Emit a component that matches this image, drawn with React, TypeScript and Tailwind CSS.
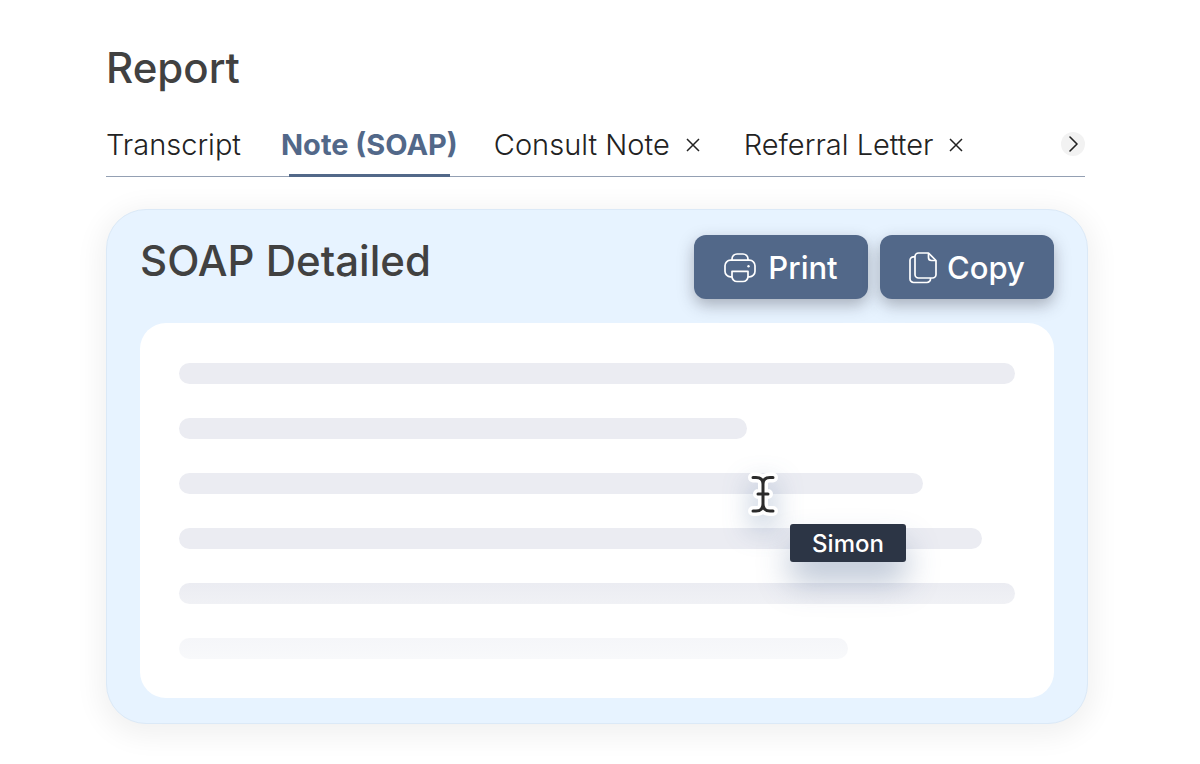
import React from "react";

const bars = [
  "w-full bg-[#ebecf2]",
  "w-[68%] bg-[#ebecf2]",
  "w-[89%] bg-[#ebecf2]",
  "w-[96%] bg-[#ebecf2]",
  "w-full bg-linear-to-b from-[#ebecf2] to-[#f0f1f5]",
  "w-[80%] bg-linear-to-b from-[#f5f6f9] to-[#f8f9fb]",
];

function CloseIcon() {
  return (
    <svg width="14" height="14" viewBox="0 0 14 14" fill="none" stroke="#222" strokeWidth="1.5" aria-hidden="true">
      <path d="M1 1 13 13M13 1 1 13" />
    </svg>
  );
}

function PrintIcon() {
  return (
    <svg width="32" height="30" viewBox="0 0 32 30" fill="none" stroke="#fff" strokeWidth="1.7" strokeLinejoin="round" aria-hidden="true">
      <path d="M8 7.2V6a5 5 0 0 1 5-5h6a5 5 0 0 1 5 5v1.200" />
      <path d="M8 23.800H6.500A5.500 5.500 0 0 1 1 18.300V12.700A5.500 5.500 0 0 1 6.500 7.200H25.500A5.500 5.500 0 0 1 31 12.700V18.300A5.500 5.500 0 0 1 25.500 23.800H24" />
      <path d="M8 18.300H24V23.500a5 5 0 0 1-5 5H13a5 5 0 0 1-5-5Z" />
      <circle cx="24.500" cy="13.200" r="1.200" fill="#fff" stroke="none" />
    </svg>
  );
}

function CopyIcon() {
  return (
    <svg width="28" height="32" viewBox="0 0 28 32" fill="none" stroke="#fff" strokeWidth="1.7" strokeLinejoin="round" aria-hidden="true">
      <path d="M19.500 1H9.500A3.500 3.500 0 0 0 6 4.500V22.500A3.500 3.500 0 0 0 9.500 26H23.500A3.500 3.500 0 0 0 27 22.500V8.500Z" />
      <path d="M19.500 1V5.500a3 3 0 0 0 3 3H27" />
      <path d="M6 4.800H4.500A3.500 3.500 0 0 0 1 8.300V27a3.500 3.500 0 0 0 3.500 3.500H18A3.500 3.500 0 0 0 21.500 27V26" />
    </svg>
  );
}

function TextCursor() {
  return (
    <svg width="34" height="48" viewBox="0 0 34 48" fill="none" strokeLinecap="round" strokeLinejoin="round" className="drop-shadow-[0_12px_14px_rgba(60,95,145,0.4)]" aria-hidden="true">
      <g stroke="#fff" strokeWidth="10">
        <path d="M7 6.500H10Q17 6.500 17 13V33Q17 40 10 40H7M27 6.500H24Q17 6.500 17 13M17 33Q17 40 24 40H27M12 23H22" />
      </g>
      <g stroke="#2b2b2b" strokeWidth="3">
        <path d="M7 6.500H10Q17 6.500 17 13V33Q17 40 10 40H7M27 6.500H24Q17 6.500 17 13M17 33Q17 40 24 40H27M12 23H22" />
      </g>
    </svg>
  );
}

const action =
  "flex h-16 w-[174px] items-center justify-center rounded-xl bg-[#526889] pt-px text-[31px] leading-10 font-medium text-white shadow-[0_6px_16px_rgba(50,50,60,0.35)]";

export default function App() {
  return (
    <main className="bg-white pt-11 pr-28 pb-10 pl-[106px] font-['Inter',sans-serif] text-[#222]">
      <h1 className="text-[42px] leading-12 font-medium text-[#414141]">Report</h1>

      <nav aria-label="Report documents" className="mt-7 mr-[3px] flex h-[57px] items-start border-b border-[#94a0b3] text-[29px] leading-[50px] font-light whitespace-nowrap">
        <button type="button">Transcript</button>
        <button type="button" aria-current="page" className="relative ml-10 flex h-[57px] items-start font-bold text-[#526889]">
          Note (SOAP)
          <span className="absolute inset-x-2 bottom-0 h-[3px] bg-[#526889]" />
        </button>
        <div className="ml-9 flex items-center gap-4">
          <button type="button">Consult Note</button>
          <button type="button" aria-label="Close Consult Note"><CloseIcon /></button>
        </div>
        <div className="ml-11 flex items-center gap-4">
          <button type="button">Referral Letter</button>
          <button type="button" aria-label="Close Referral Letter"><CloseIcon /></button>
        </div>
        <button type="button" aria-label="Next tabs" className="mt-3 ml-auto flex size-6 items-center justify-center rounded-full bg-[#f2f2f2]">
          <svg width="10" height="16" viewBox="0 0 10 16" fill="none" stroke="#222" strokeWidth="1.6" strokeLinecap="round" strokeLinejoin="round" aria-hidden="true">
            <path d="M2 1 9 8 2 15" />
          </svg>
        </button>
      </nav>

      <section className="mt-8 rounded-[40px] border border-[#dbe9f7] bg-[#e7f3ff] px-[33px] py-[25px] shadow-[0_6px_28px_6px_rgba(0,0,0,0.06)]">
        <header className="flex items-start justify-between">
          <h2 className="pt-0.5 text-[42px] leading-12 font-medium text-[#414141]">SOAP Detailed</h2>
          <div className="flex gap-3">
            <button type="button" className={action + " gap-3"}><PrintIcon />Print</button>
            <button type="button" className={action + " gap-2.5"}><CopyIcon />Copy</button>
          </div>
        </header>

        <div className="relative mt-6 flex flex-col gap-[34px] rounded-[26px] bg-white px-[39px] pt-10 pb-[39px]">
          {bars.map((bar, i) => (
            <div key={i} className={"h-[21px] rounded-full " + bar} />
          ))}
          <div className="absolute top-[148px] left-[606px]">
            <TextCursor />
          </div>
          <div className="absolute top-[201px] left-[650px] flex h-[38px] w-[116px] items-center justify-center rounded-[3px] bg-[#2c3545] pt-0.5 text-2xl font-medium text-white shadow-[0_20px_32px_rgba(60,90,135,0.35)]">
            Simon
          </div>
        </div>
      </section>
    </main>
  );
}
